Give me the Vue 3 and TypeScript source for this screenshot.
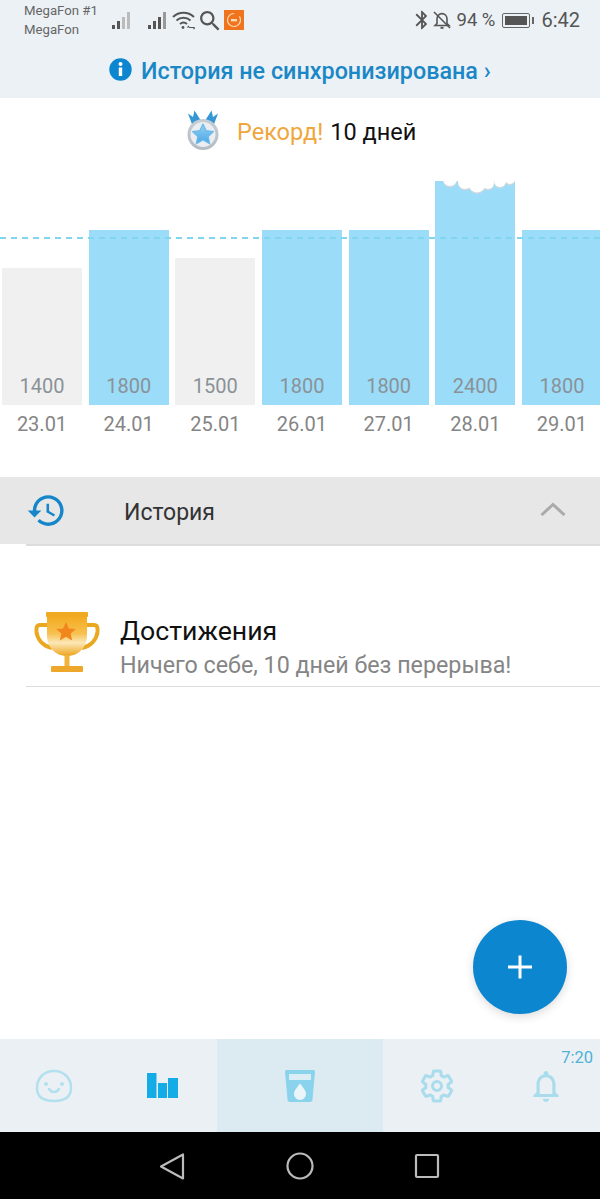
<script setup lang="ts">
interface Day {
  date: string
  value: number
  height: number
  done: boolean
}

const days: Day[] = [
  { date: '23.01', value: 1400, height: 137, done: false },
  { date: '24.01', value: 1800, height: 175, done: true },
  { date: '25.01', value: 1500, height: 147, done: false },
  { date: '26.01', value: 1800, height: 175, done: true },
  { date: '27.01', value: 1800, height: 175, done: true },
  { date: '28.01', value: 2400, height: 225, done: true },
  { date: '29.01', value: 1800, height: 175, done: true },
]

const signalBars = [
  { x: 1, h: 4 },
  { x: 6, h: 8 },
  { x: 11, h: 12 },
  { x: 16, h: 17 },
]

const cloudLobes = [
  { cx: 16, cy: -1, r: 7 },
  { cx: 31, cy: 2, r: 7 },
  { cx: 43, cy: 4, r: 8.5 },
  { cx: 54, cy: 3, r: 6 },
  { cx: 66, cy: 1, r: 6 },
  { cx: 76, cy: -1, r: 5 },
]
</script>

<template>
  <main class="app">
    <header class="top">
      <div class="status">
        <div class="carrier">
          <span>MegaFon #1</span>
          <span>MegaFon</span>
        </div>
        <svg class="signal signal--first" width="21" height="20" viewBox="0 0 21 20">
          <rect
            v-for="(b, i) in signalBars"
            :key="b.x"
            :x="b.x"
            :y="19 - b.h"
            width="3"
            :height="b.h"
            :fill="i < 2 ? '#555' : '#bbb'"
          />
        </svg>
        <svg class="signal signal--second" width="21" height="20" viewBox="0 0 21 20">
          <rect
            v-for="(b, i) in signalBars"
            :key="b.x"
            :x="b.x"
            :y="19 - b.h"
            width="3"
            :height="b.h"
            :fill="i < 3 ? '#555' : '#999'"
          />
        </svg>
        <svg class="wifi" width="23" height="20" viewBox="0 0 23 20" fill="none" stroke="#555" stroke-width="2">
          <path d="M1 7c6-5.6 15-5.6 21 0" />
          <path d="M4.5 10.5c4-3.6 10-3.6 14 0" />
          <path d="M8 14c2-1.7 5-1.7 7 0" />
          <circle cx="11" cy="17.5" r="1.4" fill="#555" stroke="none" />
          <path d="M17 17.5h5M15.5 17.5l1.5-1.5M23 17.5l-1.5 1.5" stroke-width="1.2" />
        </svg>
        <svg class="search" width="21" height="21" viewBox="2 2 19 19" fill="#555">
          <path d="M15.5 14h-.79l-.28-.27C15.41 12.59 16 11.11 16 9.5 16 5.91 13.09 3 9.5 3S3 5.91 3 9.5 5.91 16 9.5 16c1.61 0 3.09-.59 4.23-1.57l.27.28v.79l5 4.99L20.49 19l-4.99-5zm-6 0C7.01 14 5 11.99 5 9.5S7.01 5 9.5 5 14 7.01 14 9.5 11.99 14 9.5 14z" />
        </svg>
        <svg class="mi" width="20" height="20" viewBox="0 0 20 20">
          <rect width="20" height="20" fill="#f0741c" />
          <circle cx="10" cy="10" r="6.5" fill="none" stroke="#fbd9bd" stroke-width="1.2" stroke-dasharray="30 6" />
          <rect x="7" y="9" width="6" height="2.4" fill="#fbd9bd" />
        </svg>
        <div class="status__right">
          <svg class="status__bt" width="22" height="22" viewBox="0 0 24 24" fill="#555">
            <path d="M17.71 7.71L12 2h-1v7.59L6.41 5 5 6.41 10.59 12 5 17.59 6.41 19 11 14.41V22h1l5.71-5.71-4.3-4.29 4.3-4.29zM13 5.83l1.88 1.88L13 9.59V5.83zm1.88 10.46L13 18.17v-3.76l1.88 1.88z" />
          </svg>
          <svg width="20" height="20" viewBox="0 0 20 20" fill="none" stroke="#555" stroke-width="1.6">
            <path d="M3 15.5l2-2V9c0-3 2-5.4 5-5.4s5 2.4 5 5.4v4.5l2 2z" />
            <path d="M8.5 17.8h3" stroke-width="2" />
            <path d="M2 2l16 16" />
          </svg>
          <span class="status__pct">94 %</span>
          <span class="battery"><span class="battery__fill"></span></span>
          <span class="status__time">6:42</span>
        </div>
      </div>
      <div class="banner">
        <svg width="23" height="23" viewBox="0 0 23 23">
          <circle cx="11.5" cy="11.5" r="11.2" fill="#0d86d0" />
          <rect x="9.8" y="9.5" width="3.4" height="8.5" fill="#fff" />
          <circle cx="11.5" cy="6" r="2" fill="#fff" />
        </svg>
        <span>История не синхронизирована ›</span>
      </div>
    </header>

    <section class="record">
      <svg class="record__medal" width="34" height="42" viewBox="0 0 34 42">
        <defs>
          <linearGradient id="medal-ring" x1="0" y1="0" x2="0" y2="1">
            <stop offset="0" stop-color="#c6ced4" />
            <stop offset="1" stop-color="#b4bcc3" />
          </linearGradient>
          <linearGradient id="medal-star" x1="0" y1="0" x2="0" y2="1">
            <stop offset="0" stop-color="#93d2f5" />
            <stop offset="1" stop-color="#4ba6e4" />
          </linearGradient>
        </defs>
        <path d="M2 3.5l5 3.5 1.5-6.5 7 11-2 5-7-1z" fill="#3498d6" />
        <path d="M32 3.5l-5 3.5-1.5-6.5-7 11 2 5 7-1z" fill="#3498d6" />
        <circle cx="17" cy="24.5" r="15.5" fill="url(#medal-ring)" />
        <circle cx="17" cy="24.5" r="12.5" fill="#eaeef2" />
        <path d="M17 14l3.3 6.7 7.2.9-5.3 4.900 1.500 7.200-6.700-3.700-6.700 3.700 1.500-7.200-5.300-4.900 7.200-.9z" fill="url(#medal-star)" stroke="#6fb9ea" stroke-width="1.2" stroke-linejoin="round" />
      </svg>
      <span class="record__label">Рекорд!</span>
      <span class="record__value">10 дней</span>
    </section>

    <section class="chart">
      <div class="chart__bars">
        <div v-for="day in days" :key="day.date" class="chart__col">
          <div
            class="chart__bar"
            :class="{ 'chart__bar--done': day.done }"
            :style="{ height: day.height + 'px' }"
          >
            <svg v-if="day.value > 2000" class="chart__cloud" width="82" height="16" viewBox="0 0 82 16">
              <g fill="#cdd8de" transform="translate(0 1.5)">
                <circle v-for="l in cloudLobes" :key="l.cx" :cx="l.cx" :cy="l.cy" :r="l.r" />
              </g>
              <g fill="#fff">
                <rect x="0" y="0" width="82" height="1" />
                <circle v-for="l in cloudLobes" :key="l.cx" :cx="l.cx" :cy="l.cy" :r="l.r" />
              </g>
            </svg>
            <span class="chart__value">{{ day.value }}</span>
          </div>
          <span class="chart__date">{{ day.date }}</span>
        </div>
      </div>
      <div class="chart__goal"></div>
    </section>

    <section class="history">
      <svg class="history__icon" width="41" height="41" viewBox="0 0 24 24" fill="#1486c9">
        <path d="M13 3c-4.97 0-9 4.03-9 9H1l3.89 3.89.07.14L9 12H6c0-3.87 3.13-7 7-7s7 3.13 7 7-3.13 7-7 7c-1.93 0-3.68-.79-4.94-2.06l-1.42 1.42C8.27 19.99 10.51 21 13 21c4.97 0 9-4.03 9-9s-4.03-9-9-9zm-1 5v5l4.28 2.54.72-1.21-3.5-2.08V8H12z" />
      </svg>
      <span class="history__title">История</span>
      <svg class="history__chevron" width="26" height="14" viewBox="0 0 26 14" fill="none" stroke="#aaa" stroke-width="3">
        <path d="M1.5 13L13 2.5 24.5 13" />
      </svg>
    </section>
    <div class="divider"></div>

    <section class="achievement">
      <svg class="achievement__cup" width="66" height="62" viewBox="0 0 66 62">
        <defs>
          <linearGradient id="cup-body" x1="0" y1="0" x2="0" y2="1">
            <stop offset="0" stop-color="#f3a91c" />
            <stop offset="0.45" stop-color="#f7c04e" />
            <stop offset="0.68" stop-color="#fce8b8" />
            <stop offset="1" stop-color="#eda41c" />
          </linearGradient>
        </defs>
        <path d="M14 14H6c-3 0-4 2-3.5 7 1 8 7 14 15.5 16" fill="none" stroke="#eaa820" stroke-width="4" />
        <path d="M52 14h8c3 0 4 2 3.5 7-1 8-7 14-15.500 16" fill="none" stroke="#eaa820" stroke-width="4" />
        <path d="M13 4h40v20c0 12-8 21-20 21s-20-9-20-21z" fill="url(#cup-body)" />
        <rect x="12" y="1" width="42" height="5" rx="1" fill="#efa922" />
        <path d="M32 11l2.9 6.4 6.9.6-5.2 4.5 1.6 6.9-6.2-3.7-6.2 3.7 1.6-6.9-5.2-4.5 6.9-.6z" fill="#f0861c" />
        <rect x="30.5" y="44" width="5" height="12" fill="#f0b43a" />
        <rect x="17" y="55" width="32" height="6" rx="1" fill="#eda72a" />
      </svg>
      <div class="achievement__text">
        <h2>Достижения</h2>
        <p>Ничего себе, 10 дней без перерыва!</p>
      </div>
    </section>
    <div class="divider"></div>

    <div class="spacer"></div>

    <nav class="tabs">
      <div class="tabs__item">
        <svg width="38" height="34" viewBox="0 0 38 34" fill="none" stroke="#b3e0ee" stroke-width="2.5">
          <path d="M19 2c10 0 17 7 17 17 0 9-6 13-17 13S2 28 2 19C2 9 9 2 19 2z" />
          <path d="M14 20c2.5 4 7.5 4 10 0" stroke-linecap="round" />
          <circle cx="11" cy="15" r="2" fill="#b3e0ee" stroke="none" />
          <circle cx="27" cy="15" r="2" fill="#b3e0ee" stroke="none" />
        </svg>
      </div>
      <div class="tabs__item">
        <svg width="31" height="26" viewBox="0 0 31 26" fill="#13ace6">
          <rect x="0" y="0" width="9.5" height="25" />
          <rect x="11" y="10" width="9" height="15" />
          <rect x="21" y="5" width="10" height="20" />
        </svg>
      </div>
      <div class="tabs__item tabs__item--active">
        <svg width="32" height="34" viewBox="0 0 32 34">
          <path d="M1 2.5C1 1.500 2 1 3 1h26c1 0 2 .5 2 1.500l-2.500 28c-.1 1.500-1 2.500-2.500 2.500H6c-1.500 0-2.400-1-2.500-2.500z" fill="#8ad3ec" />
          <rect x="5" y="5" width="22" height="6" fill="#dceef5" />
          <path d="M16 14.5c3.4 4.500 6 7 6 10.500a6 6 0 0 1-12 0c0-3.500 2.600-6 6-10.500z" fill="#eaf5f9" />
        </svg>
      </div>
      <div class="tabs__item">
        <svg width="36" height="36" viewBox="0 0 24 24" fill="none" stroke="#a9dcec" stroke-width="2">
          <path d="M19.43 12.98c.04-.32.07-.64.07-.98 0-.34-.03-.66-.07-.98l2.11-1.65c.19-.15.24-.42.12-.64l-2-3.46c-.09-.16-.26-.25-.44-.25-.06 0-.12.01-.17.03l-2.49 1c-.52-.4-1.08-.73-1.69-.98l-.38-2.65C14.46 2.18 14.25 2 14 2h-4c-.25 0-.46.18-.49.42l-.38 2.65c-.61.25-1.17.59-1.69.98l-2.49-1c-.06-.02-.12-.03-.18-.03-.17 0-.34.09-.43.25l-2 3.46c-.13.22-.07.49.12.64l2.11 1.65c-.04.32-.07.65-.07.98 0 .33.03.66.07.98l-2.11 1.65c-.19.15-.24.42-.12.64l2 3.46c.09.16.26.25.44.25.06 0 .12-.01.17-.03l2.49-1c.52.4 1.08.73 1.69.98l.38 2.65c.03.24.24.42.49.42h4c.25 0 .46-.18.49-.42l.38-2.65c.61-.25 1.17-.59 1.69-.98l2.49 1c.06.02.12.03.18.03.17 0 .34-.09.43-.25l2-3.46c.12-.22.07-.49-.12-.64l-2.11-1.65z" />
          <circle cx="12" cy="12" r="3" />
        </svg>
      </div>
      <div class="tabs__item">
        <svg width="38" height="40" viewBox="0 0 24 24" fill="#a9dcec">
          <path d="M12 22c1.1 0 2-.9 2-2h-4c0 1.1.9 2 2 2zm6-6v-5c0-3.07-1.63-5.64-4.5-6.32V4c0-.83-.67-1.5-1.5-1.5s-1.5.67-1.5 1.5v.68C7.64 5.36 6 7.92 6 11v5l-2 2v1h16v-1l-2-2zm-2 1H8v-6c0-2.48 1.51-4.5 4-4.5s4 2.02 4 4.5v6z" />
        </svg>
        <span class="tabs__time">7:20</span>
      </div>
    </nav>

    <footer class="sysnav">
      <svg width="28" height="28" viewBox="0 0 28 28" fill="none" stroke="#bbb" stroke-width="2.2" stroke-linejoin="round">
        <path d="M25 2.5v24L3 14.5z" />
      </svg>
      <svg width="28" height="28" viewBox="0 0 28 28" fill="none" stroke="#bbb" stroke-width="2.2">
        <circle cx="14" cy="14" r="12.5" />
      </svg>
      <svg width="28" height="28" viewBox="0 0 28 28" fill="none" stroke="#bbb" stroke-width="2.2" stroke-linejoin="round">
        <rect x="2" y="3" width="22" height="22" rx="1" />
      </svg>
    </footer>

    <button class="fab" type="button" aria-label="Добавить">
      <svg width="26" height="26" viewBox="0 0 26 26" fill="none" stroke="#fff" stroke-width="3">
        <path d="M13 1.5v23M1 13h24" />
      </svg>
    </button>
  </main>
</template>

<style scoped>
.app {
  position: relative;
  width: 600px;
  height: 1199px;
  overflow: hidden;
  display: flex;
  flex-direction: column;
  background: #fff;
  font-family: Roboto, "Liberation Sans", sans-serif;
}

.top {
  height: 98px;
  background: #ecf1f5;
  flex: none;
}

.status {
  height: 40px;
  padding: 0 20px 0 24px;
  display: flex;
  align-items: center;
  color: #555;
}

.carrier {
  display: flex;
  flex-direction: column;
  width: 87px;
  font-size: 13.2px;
  line-height: 19px;
  color: #666;
  white-space: nowrap;
}

.signal--second {
  margin-left: 15px;
}

.wifi {
  margin-left: 4px;
}

.search {
  margin-left: 4px;
}

.mi {
  margin-left: 4px;
  margin-top: -1px;
}

.status__right {
  margin-left: auto;
  display: flex;
  align-items: center;
}

.status__bt {
  margin-right: -1px;
}

.status__pct {
  margin-left: 4px;
  font-size: 18.5px;
  white-space: nowrap;
}

.battery {
  margin-left: 7px;
  width: 28px;
  height: 15px;
  padding: 2px;
  box-sizing: border-box;
  border: 1px solid #666;
  border-radius: 2px;
  position: relative;
  display: block;
}

.battery::after {
  content: "";
  position: absolute;
  right: -5px;
  top: 3px;
  width: 2px;
  height: 7px;
  background: #666;
}

.battery__fill {
  display: block;
  height: 100%;
  background: #555;
}

.status__time {
  margin-left: 11px;
  font-size: 20px;
}

.banner {
  height: 58px;
  padding: 3px 0 0 109px;
  box-sizing: border-box;
  display: flex;
  align-items: center;
  gap: 9px;
  color: #1a87c6;
  font-size: 23.35px;
  font-weight: 500;
  white-space: nowrap;
}

.banner svg {
  margin-top: -3px;
}

.record {
  height: 70px;
  padding-left: 186px;
  display: flex;
  align-items: center;
  font-size: 23.5px;
  white-space: nowrap;
  flex: none;
}

.record__medal {
  margin-right: 17px;
  margin-top: -4px;
}

.record__label {
  color: #f0a63c;
  margin-top: -2px;
}

.record__value {
  margin-left: 7px;
  margin-top: -2px;
  color: #111;
}

.chart {
  position: relative;
  height: 309px;
  flex: none;
  overflow: hidden;
}

.chart__bars {
  display: flex;
  gap: 6.67px;
  padding-left: 2px;
  height: 100%;
  width: 620px;
}

.chart__col {
  width: 80px;
  flex: none;
  height: 100%;
  display: flex;
  flex-direction: column;
  justify-content: flex-start;
}

.chart__bar {
  margin-top: auto;
  position: relative;
  background: #f0f0f0;
  display: flex;
  align-items: flex-end;
  justify-content: center;
  flex: none;
}

.chart__bar--done {
  background: #9bdcf9;
}

.chart__value {
  font-size: 20px;
  line-height: 22px;
  margin-bottom: 8px;
  color: #8a9297;
}

.chart__date {
  height: 72px;
  flex: none;
  padding-top: 8px;
  box-sizing: border-box;
  text-align: center;
  font-size: 20px;
  line-height: 22px;
  color: #858585;
}

.chart__cloud {
  position: absolute;
  left: -1px;
  top: 0;
}

.chart__goal {
  position: absolute;
  left: 0;
  right: 0;
  top: 69px;
  height: 2px;
  background: repeating-linear-gradient(90deg, #7fd6ee 0 6px, transparent 6px 11px);
}

.history {
  height: 67px;
  flex: none;
  background: #e7e7e7;
  display: flex;
  align-items: center;
  padding-left: 26px;
}

.history__icon {
  flex: none;
}

.history__title {
  margin-left: 57px;
  margin-top: 3px;
  font-size: 23px;
  color: #333;
}

.history__chevron {
  margin-left: auto;
  margin-right: 34px;
  margin-top: -4px;
}

.divider {
  height: 1.5px;
  margin-left: 26px;
  background: #dcdcdc;
  flex: none;
}

.achievement {
  flex: none;
  height: 140px;
  box-sizing: border-box;
  padding: 65px 0 0 34px;
  display: flex;
  align-items: flex-start;
}

.achievement__text {
  margin-left: 20px;
}

.achievement__text h2 {
  margin: 4px 0 0;
  font-size: 26.7px;
  line-height: 32px;
  font-weight: 400;
  color: #111;
  white-space: nowrap;
}

.achievement__text p {
  margin: 4px 0 0;
  font-size: 23.25px;
  line-height: 28px;
  color: #858585;
  white-space: nowrap;
}

.spacer {
  flex: 1;
}

.tabs {
  height: 93px;
  flex: none;
  display: flex;
  background: #ebf0f4;
}

.tabs__item {
  position: relative;
  flex: 108 1 0;
  display: flex;
  align-items: center;
  justify-content: center;
}

.tabs__item--active {
  flex: 166 1 0;
  background: #dceaf2;
}

.tabs__time {
  position: absolute;
  right: 7px;
  top: 9px;
  font-size: 16.5px;
  color: #4fb2d6;
}

.sysnav {
  height: 67px;
  flex: none;
  background: #000;
  display: flex;
  align-items: center;
  justify-content: center;
  gap: 100px;
}

.fab {
  position: absolute;
  left: 473px;
  top: 920px;
  width: 94px;
  height: 94px;
  padding: 0;
  border: none;
  border-radius: 50%;
  background: #0d86d0;
  box-shadow: 0 3px 10px rgba(0, 0, 0, 0.14);
  display: flex;
  align-items: center;
  justify-content: center;
}
</style>
